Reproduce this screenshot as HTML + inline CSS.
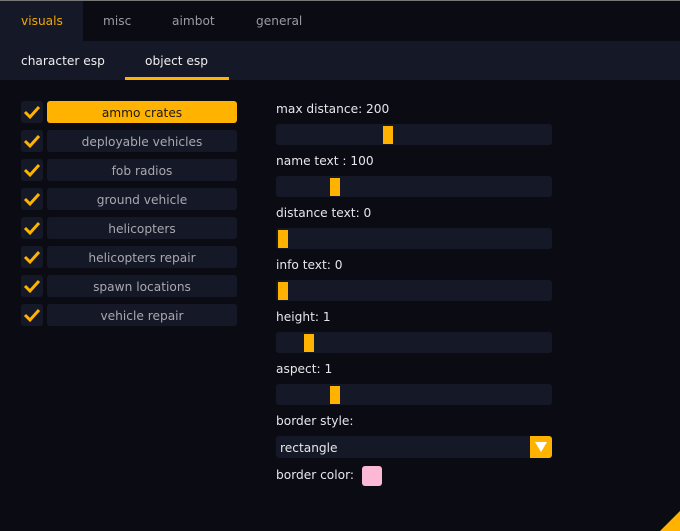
<!DOCTYPE html>
<html><head><style>
*{margin:0;padding:0;box-sizing:border-box}
body{width:680px;height:531px;background:#0b0c13;font-family:"DejaVu Sans","Liberation Sans",sans-serif;font-size:12.2px;color:#e6e6ea;position:relative;overflow:hidden}
.a{position:absolute}
.tab{position:absolute;top:2px;height:41px;line-height:42px;color:#9a9aa2;font-size:12.2px}
.cb{position:absolute;left:21px;width:22px;height:22px;background:#151826;border-radius:3px}
.btn{position:absolute;left:47px;width:190px;height:22px;background:#151826;border-radius:3px;text-align:center;line-height:24px;color:#a8a8b0}
.lbl{position:absolute;left:276px}
.sl{position:absolute;left:276px;width:276px;height:21px;background:#151826;border-radius:3px}
.g{position:absolute;top:2px;width:10px;height:18px;background:#ffb300}
</style></head><body>
<div class="a" style="left:0;top:0;width:680px;height:1px;background:#777"></div>
<div class="a" style="left:0;top:1px;width:83px;height:40px;background:#151826"></div>
<div class="tab" style="left:21px;color:#f0a800;top:0">visuals</div>
<div class="tab" style="left:103px;top:0">misc</div>
<div class="tab" style="left:172px;top:0">aimbot</div>
<div class="tab" style="left:256px;top:0">general</div>
<div class="a" style="left:0;top:41px;width:680px;height:39px;background:#151826"></div>
<div class="a" style="left:21px;top:54px;color:#eee">character esp</div>
<div class="a" style="left:145px;top:54px;color:#eee">object esp</div>
<div class="a" style="left:125px;top:77px;width:104px;height:3px;background:#ffb300"></div>

<div class="cb" style="top:101px"></div>
<div class="cb" style="top:130px"></div>
<div class="cb" style="top:159px"></div>
<div class="cb" style="top:188px"></div>
<div class="cb" style="top:217px"></div>
<div class="cb" style="top:246px"></div>
<div class="cb" style="top:275px"></div>
<div class="cb" style="top:304px"></div>
<svg class="a" style="left:0;top:0" width="250" height="340">
<g fill="none" stroke="#ffb300" stroke-width="3">
<path d="M25 112l5 5 9-10"/><path d="M25 141l5 5 9-10"/><path d="M25 170l5 5 9-10"/><path d="M25 199l5 5 9-10"/>
<path d="M25 228l5 5 9-10"/><path d="M25 257l5 5 9-10"/><path d="M25 286l5 5 9-10"/><path d="M25 315l5 5 9-10"/>
</g></svg>
<div class="btn" style="top:101px;background:#ffb300;color:#1a1a1a">ammo crates</div>
<div class="btn" style="top:130px">deployable vehicles</div>
<div class="btn" style="top:159px">fob radios</div>
<div class="btn" style="top:188px">ground vehicle</div>
<div class="btn" style="top:217px">helicopters</div>
<div class="btn" style="top:246px">helicopters repair</div>
<div class="btn" style="top:275px">spawn locations</div>
<div class="btn" style="top:304px">vehicle repair</div>

<div class="lbl" style="top:102px">max distance: 200</div>
<div class="sl" style="top:124px"><div class="g" style="left:107px"></div></div>
<div class="lbl" style="top:154px">name text : 100</div>
<div class="sl" style="top:176px"><div class="g" style="left:54px"></div></div>
<div class="lbl" style="top:206px">distance text: 0</div>
<div class="sl" style="top:228px"><div class="g" style="left:2px"></div></div>
<div class="lbl" style="top:258px">info text: 0</div>
<div class="sl" style="top:280px"><div class="g" style="left:2px"></div></div>
<div class="lbl" style="top:310px">height: 1</div>
<div class="sl" style="top:332px"><div class="g" style="left:28px"></div></div>
<div class="lbl" style="top:362px">aspect: 1</div>
<div class="sl" style="top:384px"><div class="g" style="left:54px"></div></div>
<div class="lbl" style="top:414px">border style:</div>
<div class="sl" style="top:436px;height:22px"><div class="a" style="left:4px;top:5px">rectangle</div>
<div class="a" style="left:254px;top:0;width:22px;height:22px;background:#ffb300;border-radius:0 3px 3px 0"><svg width="22" height="22"><path d="M5 6h12l-6 10z" fill="#fff"/></svg></div></div>
<div class="lbl" style="top:468px">border color:</div>
<div class="a" style="left:362px;top:466px;width:20px;height:20px;background:#fdb8d6;border-radius:3px"></div>
<svg class="a" style="left:660px;top:511px" width="20" height="20"><path d="M20 0V20H0z" fill="#ffb300"/></svg>
</body></html>
